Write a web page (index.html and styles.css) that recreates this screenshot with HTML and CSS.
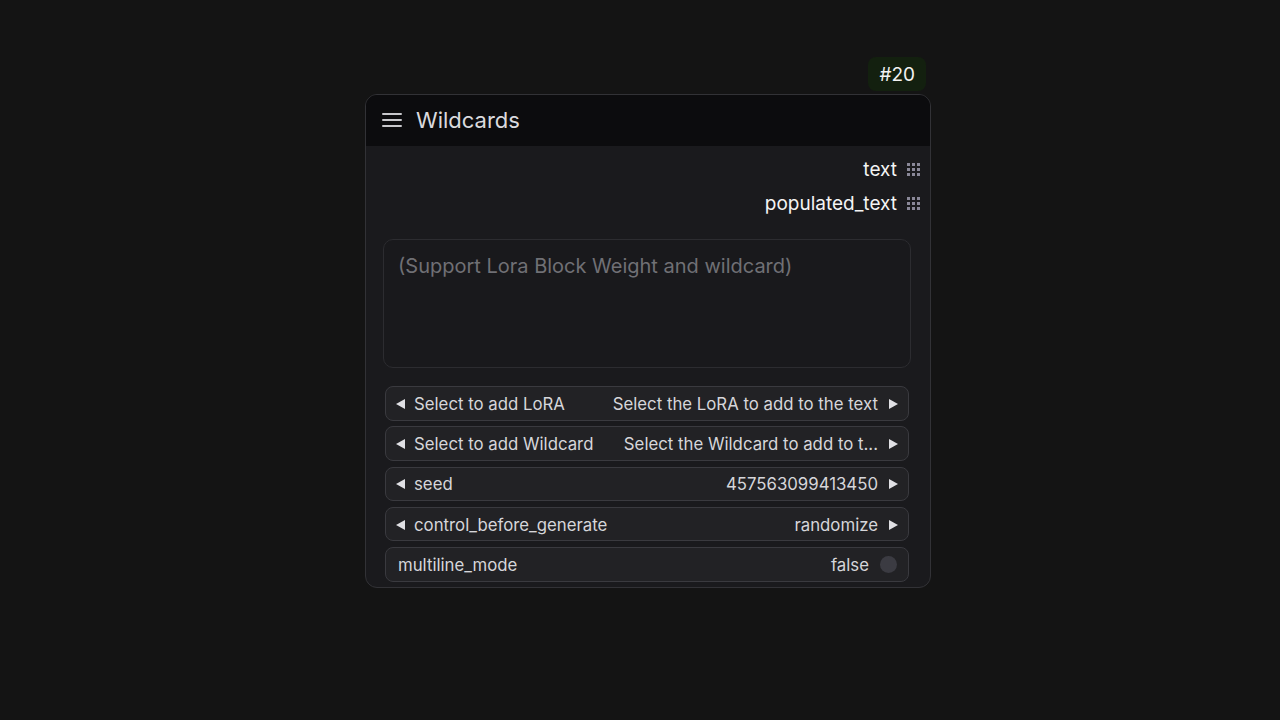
FILE: index.html
```html
<!DOCTYPE html>
<html>
<head>
<meta charset="utf-8">
<link rel="stylesheet" href="styles.css">
</head>
<body>
<div class="canvas">
  <div class="node-wrap">
    <div class="badge">#20</div>
    <div class="node">
      <div class="node-header">
        <svg class="menu-icon" width="20" height="16" viewBox="0 0 20 16">
          <path d="M1 2h18M1 8h18M1 14h18" stroke="#c8c8cc" stroke-width="2" stroke-linecap="round" fill="none"/>
        </svg>
        <span class="node-title">Wildcards</span>
      </div>
      <div class="node-body">
        <div class="outputs">
          <div class="output"><span>text</span>
            <svg class="grid-icon" width="13" height="13" viewBox="0 0 13 13"><g fill="#8a8898"><rect x="0" y="0" width="3" height="3"/><rect x="5" y="0" width="3" height="3"/><rect x="10" y="0" width="3" height="3"/><rect x="0" y="5" width="3" height="3"/><rect x="5" y="5" width="3" height="3"/><rect x="10" y="5" width="3" height="3"/><rect x="0" y="10" width="3" height="3"/><rect x="5" y="10" width="3" height="3"/><rect x="10" y="10" width="3" height="3"/></g></svg>
          </div>
          <div class="output"><span>populated_text</span>
            <svg class="grid-icon" width="13" height="13" viewBox="0 0 13 13"><g fill="#8a8898"><rect x="0" y="0" width="3" height="3"/><rect x="5" y="0" width="3" height="3"/><rect x="10" y="0" width="3" height="3"/><rect x="0" y="5" width="3" height="3"/><rect x="5" y="5" width="3" height="3"/><rect x="10" y="5" width="3" height="3"/><rect x="0" y="10" width="3" height="3"/><rect x="5" y="10" width="3" height="3"/><rect x="10" y="10" width="3" height="3"/></g></svg>
          </div>
        </div>
        <div class="textarea">(Support Lora Block Weight and wildcard)</div>
        <div class="widgets">
          <div class="widget">
            <span class="arrow left"></span>
            <span class="label">Select to add LoRA</span>
            <span class="value">Select the LoRA to add to the text</span>
            <span class="arrow right"></span>
          </div>
          <div class="widget">
            <span class="arrow left"></span>
            <span class="label">Select to add Wildcard</span>
            <span class="value">Select the Wildcard to add to t...</span>
            <span class="arrow right"></span>
          </div>
          <div class="widget">
            <span class="arrow left"></span>
            <span class="label">seed</span>
            <span class="value">457563099413450</span>
            <span class="arrow right"></span>
          </div>
          <div class="widget">
            <span class="arrow left"></span>
            <span class="label">control_before_generate</span>
            <span class="value">randomize</span>
            <span class="arrow right"></span>
          </div>
          <div class="widget toggle-widget">
            <span class="label">multiline_mode</span>
            <span class="value">false</span>
            <span class="toggle"></span>
          </div>
        </div>
      </div>
    </div>
  </div>
</div>
</body>
</html>
```

FILE: styles.css
```css
html, body {
  margin: 0;
  padding: 0;
  background: #141414;
  font-family: Inter, "Noto Sans", "Liberation Sans", sans-serif;
}
.canvas {
  width: 1280px;
  height: 720px;
  box-sizing: border-box;
  padding-top: 57px;
  padding-left: 365px;
}
.node-wrap {
  width: 566px;
  display: flex;
  flex-direction: column;
}
.badge {
  align-self: flex-end;
  margin-right: 5px;
  height: 34px;
  padding: 0 11px;
  box-sizing: border-box;
  display: flex;
  align-items: center;
  background: #13200f;
  color: #f2f2f2;
  font-size: 19px;
  border-radius: 8px;
  margin-bottom: 3px;
}
.node {
  border: 1px solid #323236;
  border-radius: 12px;
  background: #1a1a1d;
  overflow: hidden;
}
.node-header {
  height: 51px;
  background: #0c0c0e;
  display: flex;
  align-items: center;
  padding-left: 16px;
  padding-bottom: 1px;
  box-sizing: border-box;
  gap: 14px;
}
.node-title {
  color: #dadade;
  font-size: 22px;
}
.node-body {
  padding: 6px 0 5px;
}
.outputs {
  display: flex;
  flex-direction: column;
}
.output {
  height: 34px;
  display: flex;
  align-items: center;
  justify-content: flex-end;
  padding-right: 10px;
  gap: 10px;
  color: #f4f4f4;
  font-size: 19px;
}
.textarea {
  margin: 19px 19px 0 17px;
  height: 129px;
  box-sizing: border-box;
  border: 1px solid #2c2c30;
  border-radius: 10px;
  background: #19191c;
  color: #707075;
  font-size: 20px;
  padding: 14px 14px;
}
.widgets {
  margin: 18px 21px 0 19px;
  display: flex;
  flex-direction: column;
  gap: 5.7px;
}
.widget {
  height: 34.6px;
  box-sizing: border-box;
  border: 1px solid #3a3a3f;
  border-radius: 8px;
  background: #222225;
  display: flex;
  align-items: center;
  padding: 1px 10px 0;
  color: #d6d6da;
  font-size: 16.8px;
}
.widget .label {
  margin-left: 9px;
  flex: 1;
  white-space: nowrap;
}
.widget .value {
  margin-right: 11px;
  white-space: nowrap;
}
.arrow {
  width: 0;
  height: 0;
  border-top: 5px solid transparent;
  border-bottom: 5px solid transparent;
}
.arrow.left {
  border-right: 9px solid #e0e0e4;
}
.arrow.right {
  border-left: 9px solid #e0e0e4;
}
.toggle-widget {
  padding-left: 12px;
}
.toggle-widget .label {
  margin-left: 0;
}
.toggle {
  width: 17px;
  height: 17px;
  border-radius: 50%;
  background: #3b3b42;
  margin-right: 1px;
}
```
